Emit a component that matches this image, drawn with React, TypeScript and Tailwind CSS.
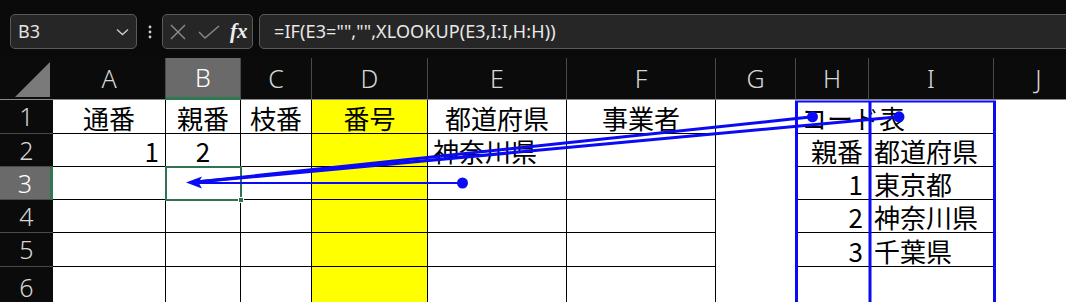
import React from "react";

type Align = "l" | "c" | "r";
type Cell = { t?: string; a?: Align };

const COLS = ["A", "B", "C", "D", "E", "F", "G", "H", "I", "J"];

const DATA: Cell[][] = [
  [
    { t: "通番", a: "c" },
    { t: "親番", a: "c" },
    { t: "枝番", a: "c" },
    { t: "番号", a: "c" },
    { t: "都道府県", a: "c" },
    { t: "事業者", a: "c" },
    {},
    { t: "コード表", a: "l" },
    {},
    {},
  ],
  [
    { t: "1", a: "r" },
    { t: "2", a: "c" },
    {},
    {},
    { t: "神奈川県", a: "l" },
    {},
    {},
    { t: "親番", a: "r" },
    { t: "都道府県", a: "l" },
    {},
  ],
  [{}, {}, {}, {}, {}, {}, {}, { t: "1", a: "r" }, { t: "東京都", a: "l" }, {}],
  [{}, {}, {}, {}, {}, {}, {}, { t: "2", a: "r" }, { t: "神奈川県", a: "l" }, {}],
  [{}, {}, {}, {}, {}, {}, {}, { t: "3", a: "r" }, { t: "千葉県", a: "l" }, {}],
  [{}, {}, {}, {}, {}, {}, {}, {}, {}, {}],
];

const ROW_H = ["h-[34px]", "h-[33px]", "h-[33px]", "h-[33px]", "h-[34px]", "h-[45px]"];

const BLUE = "#0a0af5";

function TopBar() {
  return (
    <div className="h-[58px] bg-[#0a0a0a] flex items-start pt-[14px] pl-[10px]">
      <div className="w-[127px] h-[35px] shrink-0 rounded-[5px] border border-[#5a5a5a] bg-[#262626] flex items-center justify-between pl-[7px] pr-[7px]">
        <span className="text-[18px] text-[#e4e4e4]" style={{ fontFamily: "'Noto Sans', sans-serif" }}>
          B3
        </span>
        <svg width="13" height="8" viewBox="0 0 13 8">
          <polyline points="1,1.5 6.5,6.5 12,1.5" fill="none" stroke="#cfcfcf" strokeWidth="1.3" />
        </svg>
      </div>
      <div className="w-[25px] h-[35px] shrink-0 flex items-center justify-center">
        <svg width="4" height="14" viewBox="0 0 4 14">
          <circle cx="2" cy="2" r="1.4" fill="#cfcfcf" />
          <circle cx="2" cy="7" r="1.4" fill="#cfcfcf" />
          <circle cx="2" cy="12" r="1.4" fill="#cfcfcf" />
        </svg>
      </div>
      <div className="w-[91px] h-[35px] shrink-0 rounded-[5px] border border-[#5a5a5a] bg-[#262626] flex items-center pl-[6px]">
        <svg width="18" height="18" viewBox="0 0 18 18">
          <line x1="2" y1="2" x2="16" y2="16" stroke="#8a8a8a" strokeWidth="1.4" />
          <line x1="16" y1="2" x2="2" y2="16" stroke="#8a8a8a" strokeWidth="1.4" />
        </svg>
        <svg width="22" height="14" viewBox="0 0 22 14" className="ml-[11px]">
          <polyline points="1,7 7,13 21,1" fill="none" stroke="#8a8a8a" strokeWidth="1.4" />
        </svg>
        <span
          className="ml-[10px] text-[21px] italic font-bold text-[#eeeeee] leading-none"
          style={{ fontFamily: "'Liberation Serif', serif" }}
        >
          fx
        </span>
      </div>
      <div className="ml-[6px] flex-1 h-[35px] -mr-[12px] rounded-[5px] border border-[#5a5a5a] bg-[#262626] flex items-center pl-[14px]">
        <span className="text-[18px] text-[#e8e8e8] tracking-[0.1px]" style={{ fontFamily: "'Noto Sans', sans-serif" }}>
          =IF(E3="","",XLOOKUP(E3,I:I,H:H))
        </span>
      </div>
    </div>
  );
}

function Sheet() {
  const jp = { fontFamily: "'Noto Sans CJK JP', sans-serif" };
  const hd = { fontFamily: "'Noto Sans', sans-serif" };
  return (
    <div className="grid grid-cols-[53px_113px_75px_71px_116px_139px_149px_80px_73px_125px_90px]">
      <div className="h-[42px] bg-[#0b0b0b] border-b border-[#8a8a8a] relative">
        <svg className="absolute left-0 top-0" width="53" height="42" viewBox="0 0 53 42">
          <polygon points="15,39 50,4 50,39" fill="#7a7a7a" />
        </svg>
      </div>
      {COLS.map((c) => {
        const sel = c === "B";
        return (
          <div
            key={c}
            className={
              "h-[42px] flex items-center justify-center border-r border-[#4a4a4a] text-[25px] font-light leading-none " +
              (sel
                ? "bg-[#6a6a6a] text-white border-b-[3px] border-b-[#2d7a52]"
                : "bg-[#0b0b0b] text-[#d6d6d6] border-b border-b-[#8a8a8a]")
            }
            style={hd}
          >
            {c}
          </div>
        );
      })}

      {DATA.map((row, ri) => (
        <React.Fragment key={ri}>
          <div
            className={
              ROW_H[ri] +
              " flex justify-center text-[25px] font-light leading-none border-b border-[#4a4a4a] " +
              (ri === 5 ? "items-start pt-[8px] " : "items-start pt-[4px] ") +
              (ri === 2 ? "bg-[#6a6a6a] text-white border-r-[3px] border-r-[#2d7a52]" : "bg-[#0b0b0b] text-[#d6d6d6]")
            }
            style={hd}
          >
            {ri + 1}
          </div>
          {row.map((cell, ci) => {
            const col = COLS[ci];
            const yellow = col === "D";
            const grid = ci <= 5;
            const hi = col === "H" || col === "I";
            const just = cell.a === "r" ? "justify-end pr-[6px]" : cell.a === "c" ? "justify-center" : "justify-start pl-[5px]";
            return (
              <div
                key={ci}
                className={
                  ROW_H[ri] +
                  " relative flex items-end pb-[2px] whitespace-nowrap text-black text-[26px] leading-[26px] " +
                  just +
                  " " +
                  (yellow ? "bg-[#ffff00] " : "bg-white ") +
                  (grid ? "border-r border-b border-black " : "") +
                  (hi ? "border-b border-black " : "")
                }
                style={jp}
              >
                {cell.t && <span className={col === "H" && ri === 0 ? "relative z-10" : ""}>{cell.t}</span>}
                {col === "B" && ri === 2 && (
                  <div className="absolute -left-[1px] -top-[1px] w-[77px] h-[35px] border-2 border-[#2f7352] z-10">
                    <div className="absolute -right-[4px] -bottom-[4px] w-[6px] h-[6px] bg-[#2f7352] border border-white" />
                  </div>
                )}
              </div>
            );
          })}
        </React.Fragment>
      ))}
    </div>
  );
}

function Overlay() {
  return (
    <svg className="absolute left-0 top-0 pointer-events-none z-20" width="1066" height="302" viewBox="0 0 1066 302">
      <line x1="795" y1="101.5" x2="996" y2="101.5" stroke={BLUE} strokeWidth="2" />
      <line x1="796.5" y1="101" x2="796.5" y2="302" stroke={BLUE} strokeWidth="3" />
      <line x1="870" y1="101" x2="870" y2="302" stroke={BLUE} strokeWidth="3" />
      <line x1="994.5" y1="101" x2="994.5" y2="302" stroke={BLUE} strokeWidth="3" />
      <line x1="198" y1="183" x2="462" y2="183" stroke={BLUE} strokeWidth="2" />
      <circle cx="462.5" cy="183" r="5.5" fill={BLUE} />
      <line x1="196" y1="182" x2="812.5" y2="116.8" stroke={BLUE} strokeWidth="3" />
      <line x1="196" y1="182" x2="899" y2="116.8" stroke={BLUE} strokeWidth="3" />
      <circle cx="812.5" cy="116.8" r="5.5" fill={BLUE} />
      <circle cx="899" cy="116.8" r="5.5" fill={BLUE} />
      <polygon points="186,182.5 202,176.5 198.5,182.5 202,188.5" fill={BLUE} />
    </svg>
  );
}

export default function App() {
  return (
    <div className="relative w-[1066px] h-[302px] overflow-hidden bg-[#0a0a0a]">
      <TopBar />
      <Sheet />
      <Overlay />
    </div>
  );
}
